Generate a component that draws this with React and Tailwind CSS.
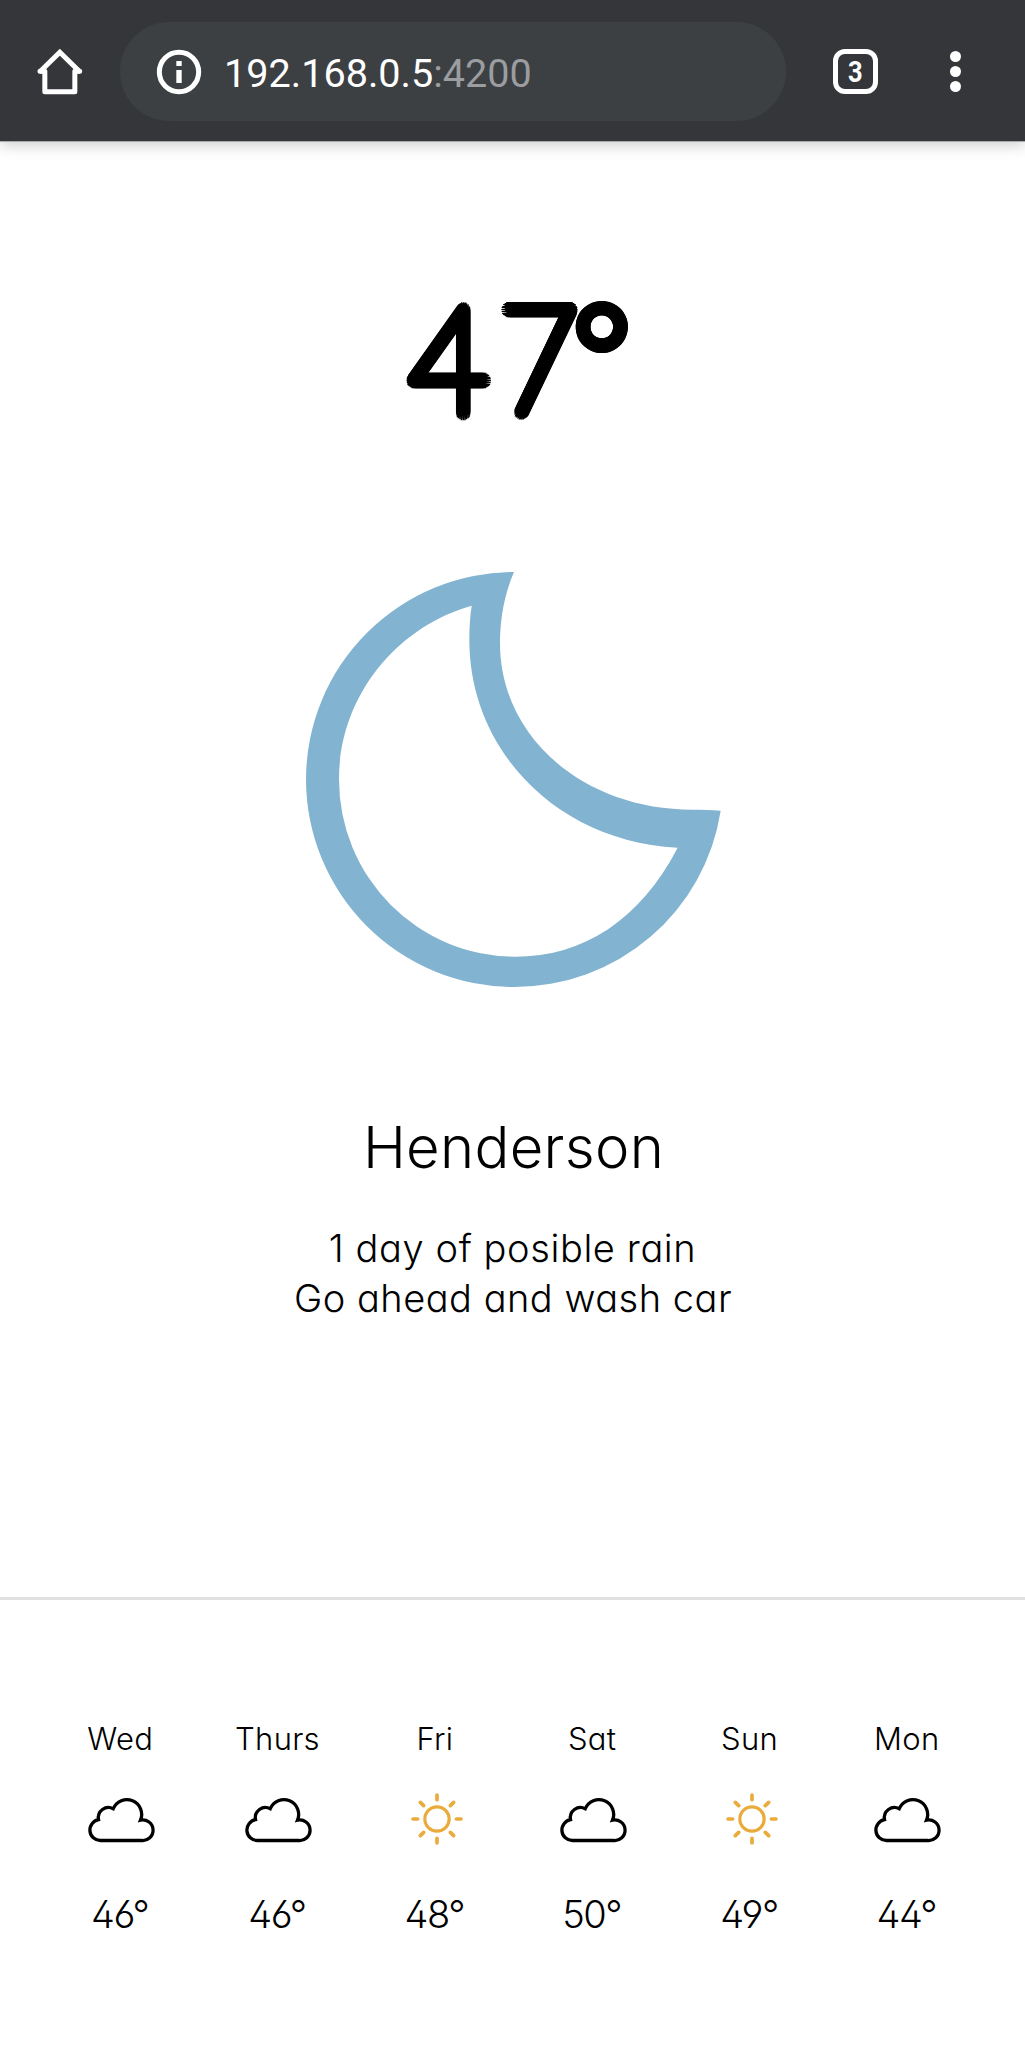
import React from 'react';

const DAYS = [
  { name: 'Wed', icon: 'cloud', temp: '46°' },
  { name: 'Thurs', icon: 'cloud', temp: '46°' },
  { name: 'Fri', icon: 'sun', temp: '48°' },
  { name: 'Sat', icon: 'cloud', temp: '50°' },
  { name: 'Sun', icon: 'sun', temp: '49°' },
  { name: 'Mon', icon: 'cloud', temp: '44°' },
];

function HomeIcon() {
  return (
    <svg className="h-[48px] w-[48px] shrink-0" viewBox="48 54 144 144" fill="none" stroke="#fff" strokeWidth="15" strokeLinecap="round" strokeLinejoin="round">
      <path d="M60 124H74.500V185.500H164.500V124H179" />
      <path d="M62 123L119.500 67L177 123" strokeLinejoin="miter" />
    </svg>
  );
}

function InfoIcon() {
  return (
    <svg className="h-[46px] w-[46px] shrink-0" viewBox="0 0 138 138">
      <circle cx="69" cy="69" r="59" fill="none" stroke="#fff" strokeWidth="15" />
      <rect x="61" y="36" width="16" height="15" fill="#fff" />
      <rect x="61" y="63" width="16" height="39" fill="#fff" />
    </svg>
  );
}

function Moon() {
  return (
    <svg className="h-[450px] w-[450px]" viewBox="0 0 1350 1350">
      <path
        fill="#82b4d1"
        fillRule="evenodd"
        d="M672 66C640 140 630 215 630 280C630 560 880 780 1210 779C1240 779 1265 779 1292 782A625 623 0 0 1 672 1311A624 623 0 0 1 48 688A624 623 0 0 1 672 66ZM545 167C320 230 147 440 147 688A528 532 0 0 0 675 1220C880 1220 1050 1110 1163 893C800 875 538 600 538 270C538 235 540 200 545 167Z"
      />
    </svg>
  );
}

function Cloud() {
  return (
    <svg className="mt-[2px] h-[59px] w-[69px]" viewBox="0 0 210 180" fill="none" stroke="#000" strokeWidth="10">
      <path d="M44 151A32 32 0 0 1 38 87.500A31 31 0 0 1 83 54A45 45 0 0 1 166 89A31.500 31.500 0 1 1 169 151Z" />
    </svg>
  );
}

function Sun() {
  return (
    <svg className="ml-[5px] h-[60px] w-[60px]" viewBox="-90 -90 180 180" fill="none" stroke="#eaab3d" strokeLinecap="round">
      <circle r="36.500" strokeWidth="9.500" />
      <path strokeWidth="11" d="M0 -58V-72M0 58V72M-58 0H-72M58 0H72M-40 -40L-50 -50M40 -40L50 -50M-40 40L-50 50M40 40L50 50" />
    </svg>
  );
}

function BrowserBar() {
  return (
    <header className="flex h-[141px] items-center bg-[#35363a] pt-[2px] pl-[36px] shadow-[0_1px_0_#aaa9ab,0_4px_14px_rgba(0,0,0,0.2)]">
      <HomeIcon />
      <div className="ml-[36px] flex h-[99px] w-[666px] items-center rounded-full bg-[#3c4043] pl-[36px]">
        <InfoIcon />
        <div className="ml-[22px] pt-[4px] font-['Roboto',sans-serif] text-[39.6px] leading-[48px] font-normal whitespace-nowrap text-white">
          192.168.0.5<span className="text-[#9b9da0]">:4200</span>
        </div>
      </div>
      <div className="ml-[47px] flex h-[45px] w-[45px] items-center justify-center rounded-[12px] border-5 border-white font-['Roboto',sans-serif] text-[29px] leading-none font-bold text-white">
        <span className="scale-x-[0.88] pt-px">3</span>
      </div>
      <div className="ml-[72px] flex flex-col gap-1">
        <i className="h-[11px] w-[11px] rounded-full bg-white" />
        <i className="h-[11px] w-[11px] rounded-full bg-white" />
        <i className="h-[11px] w-[11px] rounded-full bg-white" />
      </div>
    </header>
  );
}

export default function App() {
  return (
    <div className="flex h-[2048px] w-[1025px] flex-col bg-white font-['Inter',sans-serif] font-light text-black [font-feature-settings:'cv11','cv02','cv03','cv04']">
      <BrowserBar />
      <main className="flex h-[1456px] flex-col items-center">
        {/* Thin glyphs thickened by two round rings of shadows, which gives rounded stroke ends */}
        <h1 className="mt-[125px] flex h-[180px] items-start pl-[14px] font-['Lato',sans-serif] text-[149px] leading-[180px] font-thin [-webkit-text-stroke:6px_#000] [stroke-linejoin:round] [text-shadow:7px_0,6.8px_1.8px,6.1px_3.5px,5px_5px,3.5px_6.1px,1.8px_6.8px,0_7px,-1.8px_6.8px,-3.5px_6.1px,-5px_5px,-6.1px_3.5px,-6.8px_1.8px,-7px_0,-6.8px_-1.8px,-6.1px_-3.5px,-5px_-5px,-3.5px_-6.1px,-1.8px_-6.8px,0_-7px,1.8px_-6.8px,3.5px_-6.1px,5px_-5px,6.1px_-3.5px,6.8px_-1.8px,5.2px_0,4.5px_2px,3.6px_3.6px,2px_4.5px,0_5.2px,-2px_4.5px,-3.6px_3.6px,-4.5px_2px,-5.2px_0,-4.5px_-2px,-3.6px_-3.6px,-2px_-4.5px,0_-5.2px,2px_-4.5px,3.6px_-3.6px,4.5px_-2px]">
          <span className="scale-x-[0.93]">4</span>
          <span className="ml-[2px] scale-x-[0.93]">7</span>
          <span className="-ml-[10px] origin-[50%_30%] scale-[0.94]">°</span>
        </h1>
        <div className="mt-[104px] h-[450px] pl-[5px]">
          <Moon />
        </div>
        <h2 className="mt-[117px] pl-[2px] text-[58px] leading-[60px] tracking-[0.3px]">Henderson</h2>
        <p className="mt-[46px] text-[38px] leading-[50px] tracking-[0.6px]">1 day of posible rain</p>
        <p className="pl-[1px] text-[38px] leading-[50px] tracking-[0.5px]">Go ahead and wash car</p>
      </main>
      <section className="grid grid-cols-6 border-t-[3px] border-[#e1e1e1] pt-[119px] pr-[40px] pl-[41px]">
        {DAYS.map((day) => (
          <div key={day.name} className="flex flex-col items-center">
            <div className="pl-[1px] text-[31px] leading-[40px] tracking-[0.3px]">{day.name}</div>
            <div className="mt-[30px] flex h-[60px] items-center pl-[1px]">{day.icon === 'cloud' ? <Cloud /> : <Sun />}</div>
            <div className="mt-[40px] text-[38px] leading-[50px] tracking-[-1.5px]">{day.temp}</div>
          </div>
        ))}
      </section>
    </div>
  );
}
